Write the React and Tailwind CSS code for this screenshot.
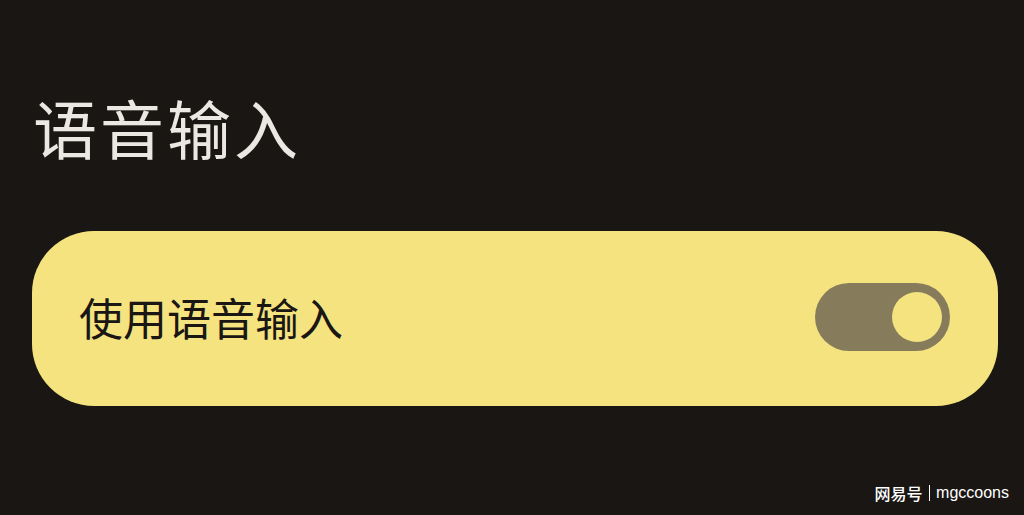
export default function App() {
  return (
    <div
      className="w-[1024px] h-[515px] bg-[#1a1613] flex flex-col relative overflow-hidden"
      style={{ fontFamily: '"Noto Sans CJK SC", "Noto Sans", sans-serif' }}
    >
      <div className="pl-[33px] pt-[86px] h-[231px]">
        <div className="text-[64px] leading-[80px] text-[#ebe7e2] tracking-[3px]">语音输入</div>
      </div>
      <div className="mx-[32px] w-[966px] h-[175px] rounded-[62px] bg-[#f4e37f] flex items-center justify-between pl-[47px] pr-[48px]">
        <div className="text-[44px] leading-[56px] text-[#1a1613] -mt-[4px]">使用语音输入</div>
        <div className="w-[135px] h-[68px] rounded-full bg-[#867c5c] flex items-center justify-end pr-[8px] -mt-[3px]">
          <div className="w-[50px] h-[50px] rounded-full bg-[#f4e37f]" />
        </div>
      </div>
      <div className="absolute right-[15px] bottom-[12px] text-white text-[16px] leading-[20px] flex items-center gap-[6px] font-medium">
        <span>网易号</span>
        <span className="w-[1.5px] h-[16px] bg-white" />
        <span style={{ fontFamily: '"Liberation Sans", sans-serif' }}>mgccoons</span>
      </div>
    </div>
  );
}
